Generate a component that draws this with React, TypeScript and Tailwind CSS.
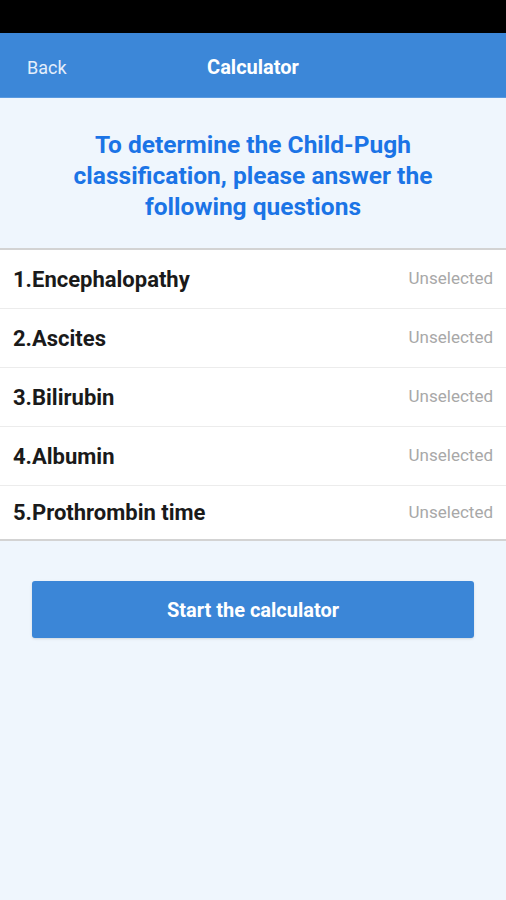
const questions = [
  "1.Encephalopathy",
  "2.Ascites",
  "3.Bilirubin",
  "4.Albumin",
  "5.Prothrombin time",
]

export default function App() {
  return (
    <div className="w-[506px] h-[900px] bg-[#eff6fd] flex flex-col font-['Roboto',sans-serif]">
      {/* status bar */}
      <div className="h-[33px] bg-black" />

      {/* header */}
      <div className="h-[65px] pt-[4px] bg-[#3c87d8] flex items-center relative border-b border-[#5a9ae0]">
        <span className="absolute left-[27px] text-[18px] text-[#e4eefb]">Back</span>
        <h1 className="w-full text-center text-[20px] font-bold text-white">Calculator</h1>
      </div>

      {/* intro */}
      <div className="pt-[31px] pb-[26px] px-6 text-center">
        <p className="text-[24.5px] leading-[31px] font-bold text-[#1b74e6]">
          To determine the Child-Pugh
          <br />
          classification, please answer the
          <br />
          following questions
        </p>
      </div>

      {/* question list */}
      <div className="bg-white border-t-2 border-b-2 border-[#d3d3d3]">
        {questions.map((q, i) => (
          <div
            key={`q${i}`}
            className={`px-[13px] flex items-center justify-between ${i < questions.length - 1 ? "h-[59px] border-b border-[#ececec]" : "h-[53px]"}`}
          >
            <span className="text-[22px] font-bold text-[#1a1a1a]">{q}</span>
            <span className="text-[17px] text-[#a8a8a8]">Unselected</span>
          </div>
        ))}
      </div>

      {/* action */}
      <div className="pt-[40px] px-8">
        <button className="w-full h-[57px] bg-[#3b86d7] rounded-[3px] text-white text-[20px] font-bold shadow-sm">
          Start the calculator
        </button>
      </div>
    </div>
  )
}
